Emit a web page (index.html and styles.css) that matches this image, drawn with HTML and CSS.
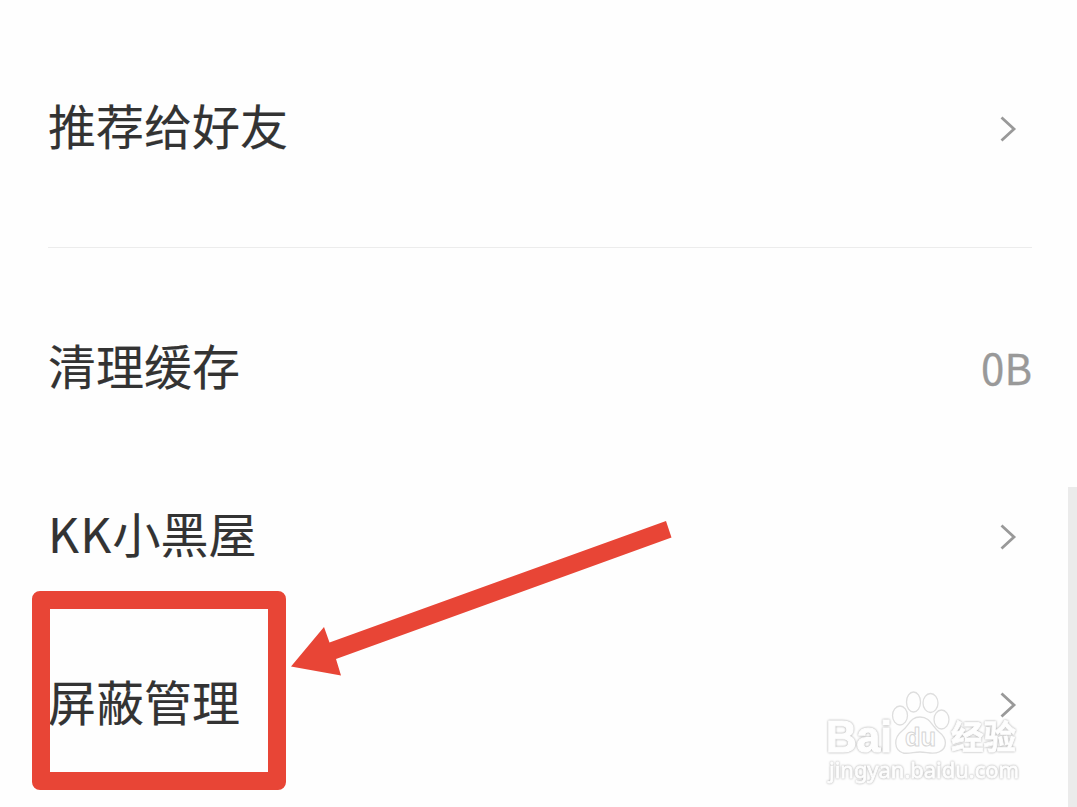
FILE: index.html
```html
<!DOCTYPE html>
<html lang="zh-CN">
<head>
    <meta charset="UTF-8">
    <meta name="viewport" content="width=device-width, initial-scale=1.0">
    <title>设置</title>
    <link rel="stylesheet" href="styles.css">
</head>
<body>

    <!-- Settings list -->
    <main class="settings">
        <section class="group">
            <div class="row">
                <span class="label">推荐给好友</span>
                <svg class="chevron" viewBox="0 0 17 26"><path d="M1.5 1.5 L14 13 L1.5 24.5"/></svg>
            </div>
        </section>
        <section class="group">
            <div class="row">
                <span class="label">清理缓存</span>
                <span class="value">0B</span>
            </div>
            <div class="row">
                <span class="label"><span class="latin">KK</span>小黑屋</span>
                <svg class="chevron" viewBox="0 0 17 26"><path d="M1.5 1.5 L14 13 L1.5 24.5"/></svg>
            </div>
            <div class="row">
                <span class="label">屏蔽管理</span>
                <svg class="chevron" viewBox="0 0 17 26"><path d="M1.5 1.5 L14 13 L1.5 24.5"/></svg>
            </div>
        </section>
    </main>

    <div class="scrollbar"></div>

    <!-- Highlight box and arrow -->
    <div class="highlight"></div>
    <svg class="arrow" viewBox="0 0 382 156">
        <path d="M0 146.5 L33 107 L38.5 122.5 L375 1 L380.5 17.5 L45 139 L50 155.5 Z"/>
    </svg>

    <!-- Watermark -->
    <svg class="watermark" viewBox="0 0 200 98">
        <ellipse cx="74" cy="25.5" rx="7.5" ry="9.5"/>
        <ellipse cx="87.5" cy="12" rx="7" ry="10"/>
        <ellipse cx="104.5" cy="13" rx="7.5" ry="9.5"/>
        <ellipse cx="115.5" cy="29.5" rx="7.5" ry="9.5"/>
        <path d="M94 27 C84 27 83 36 76 41 C67 48 68 60 77 63 C83 64 88 62 94 62 C101 62 107 65 113 62 C122 58 121 48 113 42 C106 36 104 27 94 27 Z"/>
        <text class="brand" x="0" y="61.5" textLength="66" lengthAdjust="spacingAndGlyphs">Bai</text>
        <text class="du" x="79" y="56" textLength="31" lengthAdjust="spacingAndGlyphs">du</text>
        <text class="cn" x="125" y="59" textLength="65" lengthAdjust="spacingAndGlyphs">经验</text>
        <text class="site" x="3" y="87.5" textLength="190" lengthAdjust="spacingAndGlyphs">jingyan.baidu.com</text>
    </svg>

</body>
</html>
```
FILE: styles.css
```css
body {
    margin: 0;
    height: 807px;
    position: relative;
    overflow: hidden;
    background: #fefefe;
    color: #333;
    font-family: "Noto Sans CJK SC", sans-serif;
}
.settings { padding: 45px 45px 0 48px; }
.group + .group {
    margin-top: 34px;
    padding-top: 37px;
    border-top: 1px solid #ececec;
}
.row {
    height: 168px;
    display: flex;
    align-items: center;
    justify-content: space-between;
}
.label {
    padding-bottom: 10px;
    font-size: 48px;
    line-height: 72px;
    -webkit-text-stroke: 0.15px #333;
}
.latin { letter-spacing: 1.2px; }
.value {
    padding-bottom: 5px;
    font-size: 42px;
    line-height: 64px;
    color: #999;
    -webkit-text-stroke: 0.3px #999;
}
.chevron {
    width: 17px;
    height: 26px;
    margin-right: 15px;
    fill: none;
    stroke: #999;
    stroke-width: 2.8;
}
.scrollbar {
    position: absolute;
    top: 487px;
    right: 0;
    bottom: 0;
    width: 9px;
    background: #ebebeb;
}
.highlight {
    position: absolute;
    left: 32px;
    top: 591px;
    width: 218px;
    height: 163px;
    border: 18px solid #e84536;
    border-radius: 8px;
}
.arrow {
    position: absolute;
    left: 291px;
    top: 520px;
    width: 382px;
    height: 156px;
    fill: #e84536;
}
.watermark {
    position: absolute;
    left: 826px;
    top: 690px;
    width: 200px;
    height: 98px;
    fill: none;
    stroke: #dedede;
    stroke-width: 1.3;
    stroke-linejoin: round;
    overflow: visible;
}
/* white letters, outlined by their shadow */
.watermark text {
    fill: #fefefe;
    stroke: #fefefe;
    filter: drop-shadow(0 0 0.8px #a4a4a4);
}
.brand { font: bold 44px "Liberation Sans", sans-serif; stroke-width: 1.2; }
.watermark .du {
    font: bold 25px "Liberation Sans", sans-serif;
    stroke: #d6d6d6;
    stroke-width: 1;
    filter: none;
}
.cn { font: bold 33px "Noto Sans CJK SC", sans-serif; stroke-width: 0.8; }
.site { font: 22px/1 "Noto Sans", sans-serif; stroke-width: 0.8; }
```
